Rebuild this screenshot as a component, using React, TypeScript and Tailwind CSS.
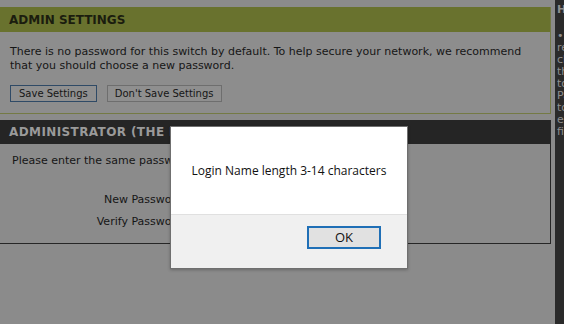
import { useState } from "react";

export default function App() {
  const [open, setOpen] = useState(true);

  return (
    <div className="relative h-[324px] w-[564px] overflow-hidden bg-[#8b8b8b] font-['DejaVu_Sans',sans-serif] text-[#161616]">
      <div className="flex h-full">
        {/* Main column */}
        <div className="flex w-[551px] shrink-0 flex-col pt-[7px]">
          {/* Admin settings */}
          <section className="border-b border-r border-[#747a45]">
            <h1 className="flex h-[25px] items-center bg-[#69722e] pl-[9px] text-[12px] font-bold text-[#1b1d0e]">
              ADMIN SETTINGS
            </h1>
            <div className="bg-[#8d8d8d] px-[10px] pb-[11px] pt-[13px] text-[11px] leading-[14px]">
              <p>
                There is no password for this switch by default. To help secure your network, we recommend
                <br />
                that you should choose a new password.
              </p>
              <div className="mt-[12px] flex gap-[10px]">
                <button className="h-[17px] border border-[#2f4a66] bg-[#8f8f8f] px-[8px] text-[10px] leading-[15px]">
                  Save Settings
                </button>
                <button className="h-[17px] border border-[#6e6e6e] bg-[#8f8f8f] px-[7px] text-[10px] leading-[15px]">
                  Don't Save Settings
                </button>
              </div>
            </div>
          </section>

          {/* Administrator */}
          <section className="mt-[6px] h-[124px] border-b border-r border-[#262626]">
            <h2 className="flex h-[24px] items-center bg-[#252525] pl-[9px] text-[12px] font-bold tracking-[0.4px] text-[#9a9a9a]">
              ADMINISTRATOR (THE DEFAULT LOGIN NAME IS ADMIN)
            </h2>
            <div className="px-[12px] pt-[10px] text-[11px] leading-[14px]">
              <p>Please enter the same password into both boxes, for confirmation.</p>
              <div className="mt-[25px] grid grid-cols-[178px_1fr] gap-y-[8px]">
                <span className="text-right">New Password :</span>
                <span className="h-[14px]" />
                <span className="text-right">Verify Password :</span>
                <span className="h-[14px]" />
              </div>
            </div>
          </section>
        </div>

        {/* Hints sidebar */}
        <aside className="ml-[4px] w-[150px] shrink-0 bg-[#2a2a2a] px-[2px] pt-[4px] text-[11px] leading-[12px] text-[#8f8f8f]">
          <p className="font-bold">Helpful Hints..</p>
          <p className="mt-[14px]">&bull;</p>
          <p>recommended</p>
          <p>change</p>
          <p>the</p>
          <p>to</p>
          <p>Password</p>
          <p>to</p>
          <p>enter</p>
          <p>field</p>
        </aside>
      </div>

      {/* Alert dialog */}
      {open && (
        <div className="absolute left-[170px] top-[126px] flex h-[143px] w-[238px] flex-col border border-[#6f6f6f] font-['Open_Sans',sans-serif] shadow-[0_1px_3px_rgba(0,0,0,0.25)]">
          <div className="flex h-[87px] items-center justify-center bg-white text-[12px] text-[#111]">
            Login Name length 3-14 characters
          </div>
          <div className="flex flex-1 items-start justify-end border-t border-[#e0e0e0] bg-[#f0f0f0] pr-[26px] pt-[14px]">
            <button
              onClick={() => setOpen(false)}
              className="-mt-[3px] h-[23px] w-[74px] border-2 border-[#1f6fb6] bg-[#e1e1e1] text-[13px] leading-[19px] text-[#111]"
            >
              OK
            </button>
          </div>
        </div>
      )}
    </div>
  );
}
